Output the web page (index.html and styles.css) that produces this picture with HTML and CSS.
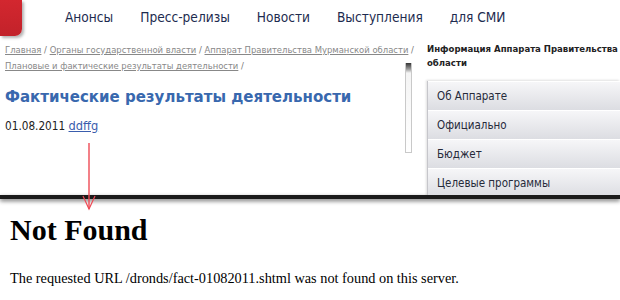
FILE: index.html
```html
<!DOCTYPE html>
<html lang="ru">
<head>
    <meta charset="UTF-8">
    <title>Not Found</title>
    <link rel="stylesheet" href="styles.css">
</head>
<body>
    <div class="shot">
        <div class="top">
            <div class="logo"></div>
            <ul class="nav">
                <li>Анонсы</li>
                <li>Пресс-релизы</li>
                <li>Новости</li>
                <li>Выступления</li>
                <li>для СМИ</li>
            </ul>
        </div>
        <div class="cols">
            <div class="left">
                <div class="main">
                    <div class="crumbs">
                        <a href="#">Главная</a> / <a href="#">Органы государственной власти</a> / <a href="#">Аппарат Правительства Мурманской области</a> /
                        <a href="#">Плановые и фактические результаты деятельности</a> /
                    </div>
                    <h1 class="title">Фактические результаты деятельности</h1>
                    <div class="date">01.08.2011 <a href="#">ddffg</a></div>
                </div>
                <div class="scroll"></div>
            </div>
            <div class="right">
                <div class="info">Информация Аппарата Правительства области</div>
                <ul class="menu">
                    <li>Об Аппарате</li>
                    <li>Официально</li>
                    <li>Бюджет</li>
                    <li>Целевые программы</li>
                </ul>
            </div>
        </div>
    </div>
    <div class="divider"></div>
    <div class="error">
        <h1>Not Found</h1>
        <p>The requested URL /dronds/fact-01082011.shtml was not found on this server.</p>
    </div>
    <svg class="arrow" width="20" height="72" viewBox="0 0 20 72">
        <line x1="9" y1="2" x2="9" y2="68" stroke="#ee4a55" stroke-width="1.4"/>
        <polyline points="3,55 9,68 15,55" fill="none" stroke="#ee4a55" stroke-width="1.2"/>
    </svg>
</body>
</html>
```

FILE: styles.css
```css
body {
    margin: 0;
    background: #fff;
    position: relative;
    width: 620px;
    height: 300px;
    overflow: hidden;
}
.shot {
    height: 195px;
    overflow: hidden;
    font-family: "DejaVu Sans Condensed", "DejaVu Sans", sans-serif;
    font-stretch: condensed;
}
.top {
    display: flex;
    height: 42px;
}
.logo {
    width: 22px;
    height: 36px;
    background: linear-gradient(#d3272f, #c2222a);
    border-bottom-right-radius: 7px;
    box-shadow: 2px 2px 3px rgba(0, 0, 0, 0.3);
}
.nav {
    display: flex;
    gap: 27px;
    list-style: none;
    margin: 0 0 0 43px;
    padding: 0;
    font-size: 13.6px;
    line-height: 34px;
    color: #1d2b4f;
}
.cols {
    display: flex;
}
.left {
    display: flex;
    flex: none;
    width: 427px;
}
.main {
    width: 400px;
    padding-left: 5px;
}
.crumbs {
    width: 420px;
    font-size: 9.4px;
    line-height: 16px;
    color: #777;
}
.crumbs a {
    color: #888;
}
.title {
    margin: 11px 0 0;
    font-size: 16.7px;
    line-height: 22px;
    color: #3868ae;
    white-space: nowrap;
}
.date {
    margin-top: 11px;
    font-size: 11.7px;
    line-height: 16px;
    color: #222;
}
.date a {
    color: #3a5dad;
    font-size: 12.7px;
}
.scroll {
    width: 5px;
    height: 89px;
    margin-top: 21px;
    border: 1px solid #c9c9c9;
    border-top: none;
    background: linear-gradient(#333 0, #999 6px, #f4f4f4 10px, #fff 100%);
}
.right {
    flex: 1;
    min-width: 0;
}
.info {
    width: 200px;
    font-size: 9.5px;
    font-weight: bold;
    line-height: 14px;
    color: #222;
}
.menu {
    list-style: none;
    margin: 11px 0 0;
    padding: 0;
    border-left: 1px solid #c6c6cb;
    box-shadow: -1px -1px 2px rgba(0, 0, 0, 0.12);
}
.menu li {
    height: 29px;
    line-height: 28px;
    padding-left: 9px;
    font-size: 11.5px;
    color: #262a3a;
    background: linear-gradient(#f6f6f8, #dcdde2);
    border-top: 1px solid #fff;
    box-sizing: border-box;
}
.divider {
    height: 4px;
    background: #1b1b1b;
    box-shadow: 0 2px 4px rgba(0, 0, 0, 0.55);
}
.error {
    padding: 0 10px;
    font-family: "Liberation Serif", serif;
    color: #000;
}
.error h1 {
    margin: 13px 0 0;
    font-size: 30px;
    line-height: 36px;
}
.error p {
    margin: 21px 0 0;
    font-size: 14.3px;
    line-height: 18px;
}
.arrow {
    position: absolute;
    left: 80px;
    top: 141px;
}
```
